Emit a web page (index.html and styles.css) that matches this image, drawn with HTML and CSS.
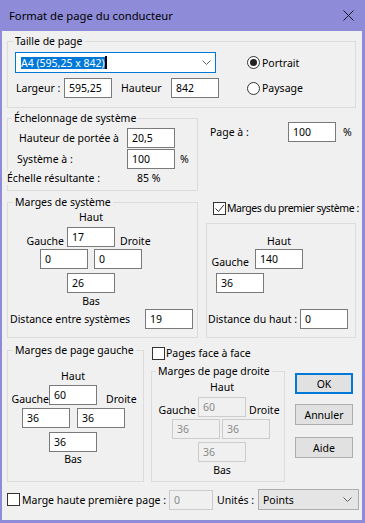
FILE: index.html
```html
<!DOCTYPE html>
<html lang="fr">
<head>
    <meta charset="UTF-8">
    <title>Format de page du conducteur</title>
    <link rel="stylesheet" href="styles.css">
</head>
<body>
<div class="window">
    <div class="titlebar">
        <span>Format de page du conducteur</span>
        <svg class="close" width="11" height="11" viewBox="0 0 11 11">
            <path d="M0.5 0.5L10.5 10.5M10.5 0.5L0.5 10.5" stroke="#1a1a1a" fill="none"/>
        </svg>
    </div>

    <div class="client">
        <!-- page size -->
        <fieldset class="group page-size">
            <legend>Taille de page</legend>
            <div class="size-grid">
                <div class="combo">
                    <span class="sel">A4 (595,25 x 842)</span><span class="caret"></span>
                    <svg class="chevron" width="9" height="5" viewBox="0 0 9 5"><path d="M0.5 0.5L4.5 4.5L8.5 0.5" stroke="#606060" fill="none"/></svg>
                </div>
                <label class="option"><span class="radio on"></span>Portrait</label>
                <span class="lbl largeur">Largeur :</span>
                <input class="edit" type="text" value="595,25">
                <span class="lbl hauteur">Hauteur</span>
                <input class="edit" type="text" value="842">
                <label class="option"><span class="radio"></span>Paysage</label>
            </div>
        </fieldset>

        <!-- scaling -->
        <div class="section scale-section">
            <fieldset class="group scale">
                <legend>Échelonnage de système</legend>
                <div class="scale-grid">
                    <span class="lbl staff">Hauteur de portée à</span>
                    <input class="edit" type="text" value="20,5">
                    <span></span>
                    <span class="lbl">Système à :</span>
                    <input class="edit" type="text" value="100">
                    <span class="unit">%</span>
                    <span class="lbl result">Échelle résultante :</span>
                    <span class="result-value">85 %</span>
                </div>
            </fieldset>
            <div class="page-scale">
                <span class="lbl">Page à :</span>
                <input class="edit" type="text" value="100">
                <span class="unit">%</span>
            </div>
        </div>

        <!-- system margins -->
        <div class="section margins-section">
            <fieldset class="group sys-margins">
                <legend>Marges de système</legend>
                <div class="cross">
                    <span class="top-label">Haut</span>
                    <input class="edit c-top" type="text" value="17">
                    <span class="left-label">Gauche</span>
                    <span class="right-label">Droite</span>
                    <input class="edit c-left" type="text" value="0">
                    <input class="edit c-right" type="text" value="0">
                    <input class="edit c-bottom" type="text" value="26">
                    <span class="bottom-label">Bas</span>
                </div>
                <div class="field-row sys-distance">
                    <span class="lbl">Distance entre systèmes</span>
                    <input class="edit" type="text" value="19">
                </div>
            </fieldset>

            <div class="first-system">
                <label class="check-row first-check">
                    <span class="check"><svg width="11" height="11" viewBox="0 0 11 11"><path d="M1.5 5.5L4.5 8.5L9.8 2" stroke="#333" fill="none"/></svg></span>Marges du premier système :
                </label>
                <fieldset class="group first-box">
                    <div class="first-grid">
                        <span class="top-label">Haut</span>
                        <span class="left-label">Gauche</span>
                        <input class="edit c-top" type="text" value="140">
                        <input class="edit c-left" type="text" value="36">
                    </div>
                    <div class="field-row first-distance">
                        <span class="lbl">Distance du haut :</span>
                        <input class="edit" type="text" value="0">
                    </div>
                </fieldset>
            </div>
        </div>

        <!-- page margins -->
        <div class="section pages-section">
            <fieldset class="group left-page">
                <legend>Marges de page gauche</legend>
                <div class="cross cross-left-page">
                    <span class="top-label">Haut</span>
                    <input class="edit c-top" type="text" value="60">
                    <span class="left-label">Gauche</span>
                    <span class="right-label">Droite</span>
                    <input class="edit c-left" type="text" value="36">
                    <input class="edit c-right" type="text" value="36">
                    <input class="edit c-bottom" type="text" value="36">
                    <span class="bottom-label">Bas</span>
                </div>
            </fieldset>

            <div class="facing">
                <label class="check-row facing-check"><span class="check"></span>Pages face à face</label>
                <fieldset class="group right-page">
                    <legend>Marges de page droite</legend>
                    <div class="cross cross-right-page">
                        <span class="top-label">Haut</span>
                        <input class="edit c-top" type="text" value="60" disabled>
                        <span class="left-label">Gauche</span>
                        <span class="right-label">Droite</span>
                        <input class="edit c-left" type="text" value="36" disabled>
                        <input class="edit c-right" type="text" value="36" disabled>
                        <input class="edit c-bottom" type="text" value="36" disabled>
                        <span class="bottom-label">Bas</span>
                    </div>
                </fieldset>
            </div>

            <div class="buttons">
                <button class="btn default">OK</button>
                <button class="btn cancel">Annuler</button>
                <button class="btn help">Aide</button>
            </div>
        </div>

        <!-- bottom line -->
        <div class="bottom-row">
            <label class="check-row first-page"><span class="check"></span>Marge haute première page :</label>
            <input class="edit small" type="text" value="0" disabled>
            <span class="lbl units">Unités :</span>
            <div class="select">
                <span>Points</span>
                <svg class="chevron" width="9" height="5" viewBox="0 0 9 5"><path d="M0.5 0.5L4.5 4.5L8.5 0.5" stroke="#606060" fill="none"/></svg>
            </div>
        </div>
    </div>
</div>
</body>
</html>
```

FILE: styles.css
```css
body {
    margin: 0;
    background: #8e8cd8;
    font-family: "Noto Sans", sans-serif;
    font-size: 10.5px;
    line-height: 14px;
    color: #000;
}
.window {
    width: 365px;
    height: 523px;
}
.titlebar {
    height: 31px;
    display: flex;
    align-items: center;
    justify-content: space-between;
    padding: 0 11px 0 9px;
    box-sizing: border-box;
    font-size: 11.25px;
}
.client {
    margin: 0 3px 0 2px;
    height: 489px;
    padding-left: 5px;
    box-sizing: border-box;
    background: #f0f0f0;
    overflow: hidden;
}

/* group boxes */
.group {
    margin: 0;
    padding: 0;
    min-width: 0;
    border: 1px solid #dcdcdc;
    box-sizing: border-box;
}
.group legend {
    padding: 0 2px;
    margin-left: 5px;
    line-height: 15px;
}
.section {
    display: flex;
    align-items: flex-start;
}
.lbl {
    white-space: nowrap;
}

/* controls */
.edit {
    box-sizing: border-box;
    width: 48px;
    height: 20px;
    margin: 0;
    padding: 0 0 0 4px;
    border: 1px solid #7a7a7a;
    background: #fff;
    font: inherit;
    color: #000;
    outline: none;
}
.edit:disabled {
    border-color: #cccccc;
    background: #f0f0f0;
    color: #8a8a8a;
}
.check-row {
    display: flex;
    align-items: center;
    gap: 1px;
    height: 14px;
    white-space: nowrap;
}
.check {
    width: 13px;
    height: 13px;
    box-sizing: border-box;
    border: 1px solid #333;
    background: #fff;
    display: flex;
    align-items: center;
    justify-content: center;
    flex: none;
}
.option {
    grid-column: 6;
    display: flex;
    align-items: center;
    gap: 2px;
}
.radio {
    width: 13px;
    height: 13px;
    box-sizing: border-box;
    border: 1px solid #333;
    border-radius: 50%;
    background: #fff;
    display: flex;
    align-items: center;
    justify-content: center;
}
.radio.on::after {
    content: "";
    width: 7px;
    height: 7px;
    border-radius: 50%;
    background: #222;
}
.btn {
    width: 58px;
    height: 21px;
    padding: 0;
    border: 1px solid #adadad;
    background: #e1e1e1;
    font: inherit;
    color: #000;
}
.btn.default {
    border: 2px solid #0078d7;
}

/* page size */
.page-size {
    width: 349px;
    margin-top: 3px;
}
.size-grid {
    display: grid;
    grid-template-columns: 49px 48px 59px 48px 28px auto;
    grid-template-rows: 21px 20px;
    row-gap: 5px;
    align-items: center;
    padding: 3px 0 9px 7px;
}
.combo {
    grid-column: 1 / 5;
    width: 201px;
    height: 21px;
    box-sizing: border-box;
    border: 1px solid #0078d7;
    background: #fff;
    display: flex;
    align-items: center;
    padding-left: 5px;
}
.sel {
    background: #0078d7;
    color: #fff;
    line-height: 12px;
}
.caret {
    width: 2px;
    height: 13px;
    background: #000;
}
.combo .chevron {
    margin: 0 4px 0 auto;
}
.largeur {
    padding-left: 1px;
}
.hauteur {
    padding-left: 9px;
}

/* scaling */
.scale-section {
    margin-top: 3px;
}
.scale {
    width: 191px;
}
.scale legend {
    margin-left: 4px;
}
.scale-grid {
    display: grid;
    grid-template-columns: 110px 48px auto;
    grid-template-rows: 20px 20px 15px;
    row-gap: 1px;
    align-items: center;
    padding: 2px 0 5px 9px;
}
.staff {
    margin-left: 2px;
}
.unit {
    padding-left: 5px;
}
.result {
    align-self: end;
    margin-left: -10px;
    background: #f0f0f0;
}
.result-value {
    align-self: end;
    padding-left: 10px;
}
.page-scale {
    display: flex;
    align-items: center;
    margin: 11px 0 0 12px;
}
.page-scale .lbl {
    width: 78px;
}
.page-scale .unit {
    padding-left: 7px;
}

/* cross of margin fields */
.cross {
    display: grid;
    grid-template-columns: 27px 21px 6px 21px 27px;
    grid-template-rows: 14px 3px 20px 2px 20px 4px 20px 1px 14px;
    width: max-content;
}
.top-label,
.bottom-label {
    grid-column: 2 / 5;
    justify-self: center;
}
.top-label {
    grid-row: 1;
}
.bottom-label {
    grid-row: 9;
}
.cross .c-top {
    grid-column: 2 / 5;
    grid-row: 3;
}
.cross .c-left {
    grid-column: 1 / 3;
    grid-row: 5;
}
.cross .c-right {
    grid-column: 4 / 6;
    grid-row: 5;
}
.cross .c-bottom {
    grid-column: 2 / 5;
    grid-row: 7;
}
.left-label,
.right-label {
    grid-row: 3 / 6;
    align-self: start;
    white-space: nowrap;
}
.left-label {
    grid-column: 1;
    justify-self: end;
    margin: 7px 3px 0 0;
}
.right-label {
    grid-column: 5;
    justify-self: start;
    margin: 7px 0 0 5px;
}

/* system margins */
.margins-section {
    margin-top: 4px;
}
.sys-margins {
    width: 191px;
}
.sys-margins .cross {
    margin-left: 32px;
}
.field-row {
    display: flex;
    align-items: center;
}
.sys-distance {
    margin: 1px 0 8px 2px;
}
.sys-distance .lbl {
    width: 135px;
}
.first-system {
    width: 150px;
    margin-left: 8px;
}
.first-check {
    margin: 6px 0 0 7px;
    letter-spacing: -0.45px;
}
.first-box {
    margin-top: 8px;
}
.first-grid {
    display: grid;
    grid-template-columns: 39px 9px 39px;
    grid-template-rows: 14px 1px 20px 4px 20px;
    width: max-content;
    margin: 10px 0 0 9px;
}
.first-grid .top-label {
    grid-column: 2 / 4;
}
.first-grid .c-top {
    grid-column: 2 / 4;
    grid-row: 3;
}
.first-grid .c-left {
    grid-column: 1 / 3;
    grid-row: 5;
}
.first-grid .left-label {
    margin: 6px 6px 0 0;
}
.first-distance {
    margin: 16px 0 8px 1px;
}
.first-distance .lbl {
    width: 92px;
}

/* page margins */
.pages-section {
    margin-top: 5px;
}
.left-page {
    width: 137px;
}
.cross-left-page {
    grid-template-columns: 27px 21px 7px 20px 28px;
    grid-template-rows: 14px 2px 20px 3px 20px 4px 20px 0 14px;
    margin: 11px 0 15px 14px;
}
.cross-left-page .left-label {
    margin-right: 0;
}
.cross-left-page .right-label {
    margin-left: 9px;
}
.facing {
    width: 134px;
    margin-left: 7px;
}
.facing-check {
    margin: 3px 0 0 1px;
}
.right-page {
    margin-top: 4px;
}
.right-page legend {
    margin-left: 4px;
}
.cross-right-page {
    grid-template-columns: 26px 22px 2px 24px 24px;
    grid-template-rows: 14px 3px 20px 2px 20px 3px 20px 1px 14px;
    margin: 1px 0 4px 20px;
}
.cross-right-page .left-label {
    margin: 6px 2px 0 0;
}
.cross-right-page .right-label {
    margin: 6px 0 0 3px;
}
.buttons {
    display: flex;
    flex-direction: column;
    margin: 30px 0 0 10px;
}
.cancel {
    margin-top: 10px;
}
.help {
    margin-top: 12px;
}

/* bottom line */
.bottom-row {
    display: flex;
    align-items: center;
    height: 21px;
    margin-top: 7px;
}
.first-page {
    width: 162px;
    gap: 2px;
}
.edit.small {
    width: 44px;
}
.units {
    width: 41px;
    margin-left: 4px;
}
.select {
    width: 101px;
    height: 21px;
    box-sizing: border-box;
    border: 1px solid #adadad;
    background: #e5e5e5;
    display: flex;
    align-items: center;
    padding-left: 4px;
}
.select .chevron {
    margin: 0 6px 0 auto;
}
```
